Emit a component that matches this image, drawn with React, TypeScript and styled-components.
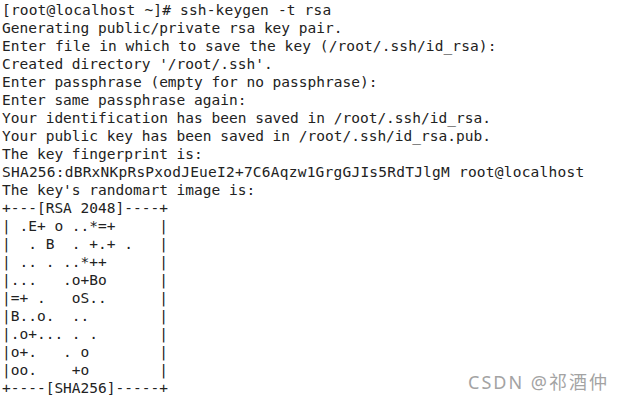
import React from "react";
import styled, { createGlobalStyle } from "styled-components";

const Global = createGlobalStyle`
  html, body { margin: 0; padding: 0; background: #ffffff; }
  #root { width: 623px; height: 400px; }
`;

const Screen = styled.div`
  position: relative;
  width: 623px;
  height: 400px;
  overflow: hidden;
  background: #ffffff;
  box-sizing: border-box;
  padding: 1px 0 0 2px;
`;

const Terminal = styled.pre`
  margin: 0;
  display: flex;
  flex-direction: column;
  font-family: "DejaVu Sans Mono", "Liberation Mono", monospace;
  font-size: 14.5px;
  line-height: 18px;
  color: #222222;
  white-space: pre;
`;

const Line = styled.span<{ $spread?: number }>`
  display: block;
  height: 18px;
  letter-spacing: ${(p) => (p.$spread ?? 0)}px;
`;

const Watermark = styled.div`
  position: absolute;
  right: 14px;
  bottom: 8px;
  font-family: "Noto Sans", "Noto Sans CJK SC", sans-serif;
  font-size: 18px;
  line-height: 20px;
  color: #a3a3a3;
  letter-spacing: 2px;
`;

const lines: { text: string; spread?: number }[] = [
  { text: "[root@localhost ~]# ssh-keygen -t rsa", spread: 0.17 },
  { text: "Generating public/private rsa key pair." },
  { text: "Enter file in which to save the key (/root/.ssh/id_rsa):", spread: 0.1 },
  { text: "Created directory '/root/.ssh'." },
  { text: "Enter passphrase (empty for no passphrase):" },
  { text: "Enter same passphrase again:" },
  { text: "Your identification has been saved in /root/.ssh/id_rsa." },
  { text: "Your public key has been saved in /root/.ssh/id_rsa.pub." },
  { text: "The key fingerprint is:" },
  { text: "SHA256:dBRxNKpRsPxodJEueI2+7C6Aqzw1GrgGJIs5RdTJlgM root@localhost", spread: 0.23 },
  { text: "The key's randomart image is:" },
  { text: "+---[RSA 2048]----+" },
  { text: "| .E+ o ..*=+     |" },
  { text: "|  . B  . +.+ .   |" },
  { text: "| .. . ..*++      |" },
  { text: "|...   .o+Bo      |" },
  { text: "|=+ .   oS..      |" },
  { text: "|B..o.  ..        |" },
  { text: "|.o+... . .       |" },
  { text: "|o+.   . o        |" },
  { text: "|oo.    +o        |" },
  { text: "+----[SHA256]-----+" },
  { text: "[root@localhost ~]# " },
];

export default function App() {
  return (
    <>
      <Global />
      <Screen>
        <Terminal>
          {lines.map((l, i) => (
            <Line key={i} $spread={l.spread}>
              {l.text}
            </Line>
          ))}
        </Terminal>
        <Watermark>CSDN @祁酒仲</Watermark>
      </Screen>
    </>
  );
}
